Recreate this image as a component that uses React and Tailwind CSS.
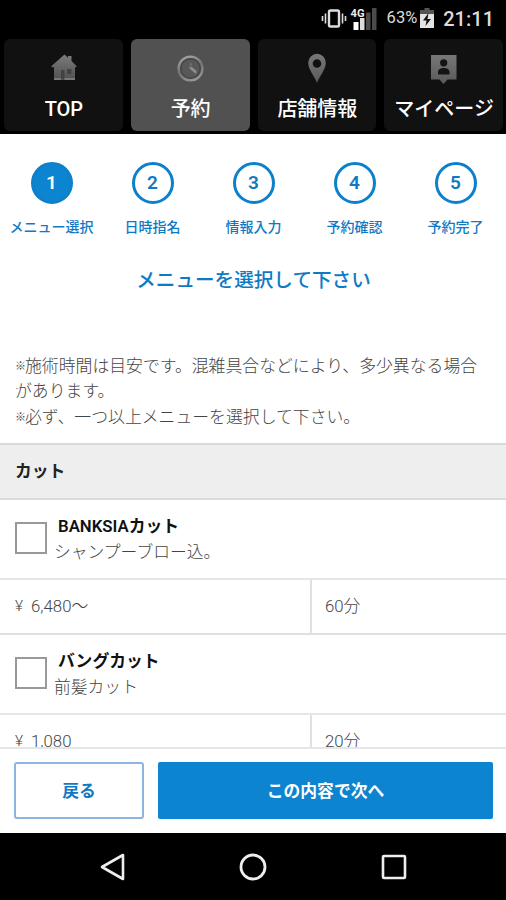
const TABS = [
  { label: "TOP", Icon: HomeIcon },
  { label: "予約", Icon: ClockIcon, active: true },
  { label: "店舗情報", Icon: PinIcon },
  { label: "マイページ", Icon: ProfileIcon },
];

const STEPS = ["メニュー選択", "日時指名", "情報入力", "予約確認", "予約完了"];

const MENUS = [
  { name: "BANKSIAカット", note: "シャンプーブロー込。", price: "6,480〜", time: "60分" },
  { name: "バングカット", note: "前髪カット", price: "1,080", time: "20分" },
];

function HomeIcon() {
  return (
    <svg width="28" height="30" viewBox="0 0 28 30">
      <defs>
        <linearGradient id="home" x1="0" y1="0" x2="0" y2="1">
          <stop offset="0" stopColor="#7c7c7c" />
          <stop offset="1" stopColor="#505050" />
        </linearGradient>
      </defs>
      <path d="M14.5 1.5 18 4.8V3h3.5v5L26.5 13v1.3H25V27H4V14.3H1.5V13z" fill="url(#home)" />
      <path d="M11 17h3.500v9H11zM17 16h4.500v5H17z" fill="#424242" />
      <path d="M4 26h7M14.500 26H25" stroke="#858585" strokeWidth="1.5" />
    </svg>
  );
}

function ClockIcon() {
  return (
    <svg width="28" height="30" viewBox="0 0 28 30">
      <defs>
        <linearGradient id="clock" x1="0.3" y1="0" x2="0.7" y2="1">
          <stop offset="0" stopColor="#a0a0a0" />
          <stop offset="0.5" stopColor="#747474" />
          <stop offset="1" stopColor="#989898" />
        </linearGradient>
      </defs>
      <circle cx="13.500" cy="15.500" r="11.800" fill="#585858" stroke="url(#clock)" strokeWidth="2.600" />
      <circle cx="13.500" cy="15.500" r="9.800" fill="#585858" stroke="#454545" strokeWidth="1.500" />
      <path d="M13.800 10v5.500" stroke="#6c6c6c" strokeWidth="2" />
      <path d="m11.500 14.500 7.500 6.500.500-3-4-3.500z" fill="#919191" />
    </svg>
  );
}

function PinIcon() {
  return (
    <svg width="28" height="30" viewBox="0 0 28 30">
      <defs>
        <linearGradient id="pin" x1="0" y1="0" x2="0" y2="1">
          <stop offset="0" stopColor="#777" />
          <stop offset="1" stopColor="#5a5a5a" />
        </linearGradient>
      </defs>
      <path
        d="M14 .8a8.8 8.8 0 0 0-8.8 8.8C5.2 17 11 22 14 30c3-8 8.800-13 8.800-20.400A8.800 8.800 0 0 0 14 .8zm0 5.400a4.300 4.300 0 1 1 0 8.600 4.300 4.300 0 0 1 0-8.600z"
        fill="url(#pin)"
        fillRule="evenodd"
      />
    </svg>
  );
}

function ProfileIcon() {
  return (
    <svg width="28" height="32" viewBox="0 0 28 32">
      <defs>
        <linearGradient id="profile" x1="0" y1="0" x2="0" y2="1">
          <stop offset="0" stopColor="#777" />
          <stop offset="1" stopColor="#5a5a5a" />
        </linearGradient>
      </defs>
      <path d="M1 2h25.500v24.500h-9l-4 4.500-4-4.500H1z" fill="url(#profile)" />
      <circle cx="13.700" cy="9.800" r="3.600" fill="#141414" />
      <path d="M8 21.500v-2.500c0-5.300 11.500-5.300 11.500 0v2.500z" fill="#141414" />
    </svg>
  );
}

function StatusBar() {
  return (
    <div className="flex h-9 shrink-0 items-center justify-end pr-[12px] text-[#dcdcdc]">
      <svg width="56" height="26" viewBox="0 0 56 26" className="mr-[10px]">
        <g fill="none" stroke="#ddd">
          <rect x="8" y="5.500" width="10" height="16" rx="1.500" strokeWidth="2.400" />
          <path d="M4.500 8.500v10M21.500 8.500v10" strokeWidth="1.600" />
          <path d="M1.500 11v5M24.500 11v5" strokeWidth="1.600" />
        </g>
        <path d="M32.500 17h5v8h-5z" fill="#fff" />
        <path d="M39 13h4.500v12H39z" fill="#ddd" />
        <path d="M45 7.500h4.500V25H45zM51 3h4.500v22H51z" fill="#4b4b4b" />
        <text x="29.500" y="12" fontSize="11" fontWeight="700" fill="#eee" textLength="14" lengthAdjust="spacingAndGlyphs">
          4G
        </text>
      </svg>
      <span className="pt-px text-[16.500px]">63%</span>
      <svg width="16" height="22" viewBox="0 0 16 22" className="mr-[8px] ml-[2px]">
        <path d="M5.500 1h5v2H15v5H1V3h4.500z" fill="#555" />
        <path d="M1 7h14v14H1z" fill="#e4e4e4" />
        <path d="M9.500 6 4 13.500h3.500L6.500 19l5.500-7H8.500z" fill="#111" />
      </svg>
      <span className="pt-px text-[20px] font-medium">21:11</span>
    </div>
  );
}

function MenuItem({ menu }) {
  return (
    <div className="shrink-0">
      <div className="flex h-20 items-center border-b-2 border-[#e6e6e6] pl-[15px]">
        <span className="mt-[-2px] h-8 w-8 shrink-0 border-[2.500px] border-[#999]" />
        <div className="ml-[7px] pt-px text-[16.800px] leading-[25.400px]">
          <p className="pl-1 font-semibold text-[#111]">{menu.name}</p>
          <p className="font-light">{menu.note}</p>
        </div>
      </div>
      <div className="flex h-[55px] border-b-2 border-[#e0e0e0] text-[16.800px] leading-[53px] font-light">
        <div className="flex w-[310px] pl-[15px]">
          <span className="w-[16px] text-[15.500px]">¥</span>
          {menu.price}
        </div>
        <div className="flex-1 border-l-2 border-[#e0e0e0] pl-[13px]">{menu.time}</div>
      </div>
    </div>
  );
}

function Note({ children }) {
  return (
    <p className="flex">
      <span className="w-[10px] shrink-0 text-[11px] font-medium">※</span>
      <span>{children}</span>
    </p>
  );
}

export default function App() {
  return (
    <div className="flex h-[900px] w-[506px] flex-col overflow-hidden bg-white font-['Roboto','Noto_Sans_CJK_JP',sans-serif] text-[#444]">
      <header className="h-[134px] shrink-0 bg-black">
        <StatusBar />
        <nav className="grid grid-cols-4 gap-2 pt-[3px] pr-[3px] pl-1">
          {TABS.map(({ label, Icon, active }) => (
            <div
              key={label}
              className={`flex h-[92px] flex-col items-center rounded-md pt-[14px] pl-px text-white ${
                active ? "bg-[#515151]" : "bg-[#111]"
              }`}
            >
              <div className="h-8">
                <Icon />
              </div>
              <span className="mt-[9px] text-[20px] leading-[30px] font-medium whitespace-nowrap">{label}</span>
            </div>
          ))}
        </nav>
      </header>

      <main className="flex min-h-0 flex-1 flex-col overflow-hidden">
        <ol className="mt-7 grid shrink-0 grid-cols-5 pl-px text-[#0f7ac4]">
          {STEPS.map((step, i) => (
            <li key={step} className="flex flex-col items-center">
              <span
                className={`flex h-[42px] w-[42px] items-center justify-center rounded-full border-[3px] border-[#0d80cc] text-[19px] font-semibold ${
                  i === 0 ? "bg-[#0d84d0] text-white" : ""
                }`}
              >
                {i + 1}
              </span>
              <span className="mt-[13px] text-[14px] leading-5 font-medium whitespace-nowrap">{step}</span>
            </li>
          ))}
        </ol>
        <h1 className="mt-[29px] shrink-0 pl-px text-center text-[19.600px] leading-[30px] font-medium text-[#0f7ac4]">
          メニューを選択して下さい
        </h1>
        <div className="mt-[58px] shrink-0 pl-[15px] text-[16.850px] leading-[25.400px] font-light whitespace-nowrap">
          <Note>施術時間は目安です。混雑具合などにより、多少異なる場合</Note>
          <p>があります。</p>
          <Note>必ず、一つ以上メニューを選択して下さい。</Note>
        </div>
        <h2 className="mt-[13px] h-[57px] shrink-0 border-y-2 border-[#dadada] bg-[#eee] pl-[15px] text-[16.800px] leading-[53px] font-semibold text-[#222]">
          カット
        </h2>
        {MENUS.map((menu) => (
          <MenuItem key={menu.name} menu={menu} />
        ))}
      </main>

      <footer className="flex h-[86px] shrink-0 gap-[14px] border-t-2 border-[#e6e6e6] pt-[13px] pr-[13px] pl-[14px] text-[16.800px] font-bold">
        <button className="h-[57px] w-[130px] rounded-[3px] border-2 border-[#8db5e0] pt-[3px] text-[#0f7ac4]">戻る</button>
        <button className="h-[57px] flex-1 rounded-[2px] bg-[#0d84d0] pt-[3px] text-white">この内容で次へ</button>
      </footer>

      <div className="flex h-[67px] shrink-0 items-center justify-around bg-black pr-[42px] pl-[43px]">
        <svg width="28" height="28" viewBox="0 0 28 28" fill="none" stroke="#eee" strokeWidth="2.600">
          <path d="M3 14 24 2v24z" strokeLinejoin="round" />
        </svg>
        <svg width="28" height="28" viewBox="0 0 28 28" fill="none" stroke="#eee" strokeWidth="2.800">
          <circle cx="14" cy="14" r="12" />
        </svg>
        <svg width="28" height="28" viewBox="0 0 28 28" fill="none" stroke="#eee" strokeWidth="2.600">
          <rect x="3" y="3" width="22" height="22" rx="1" />
        </svg>
      </div>
    </div>
  );
}
